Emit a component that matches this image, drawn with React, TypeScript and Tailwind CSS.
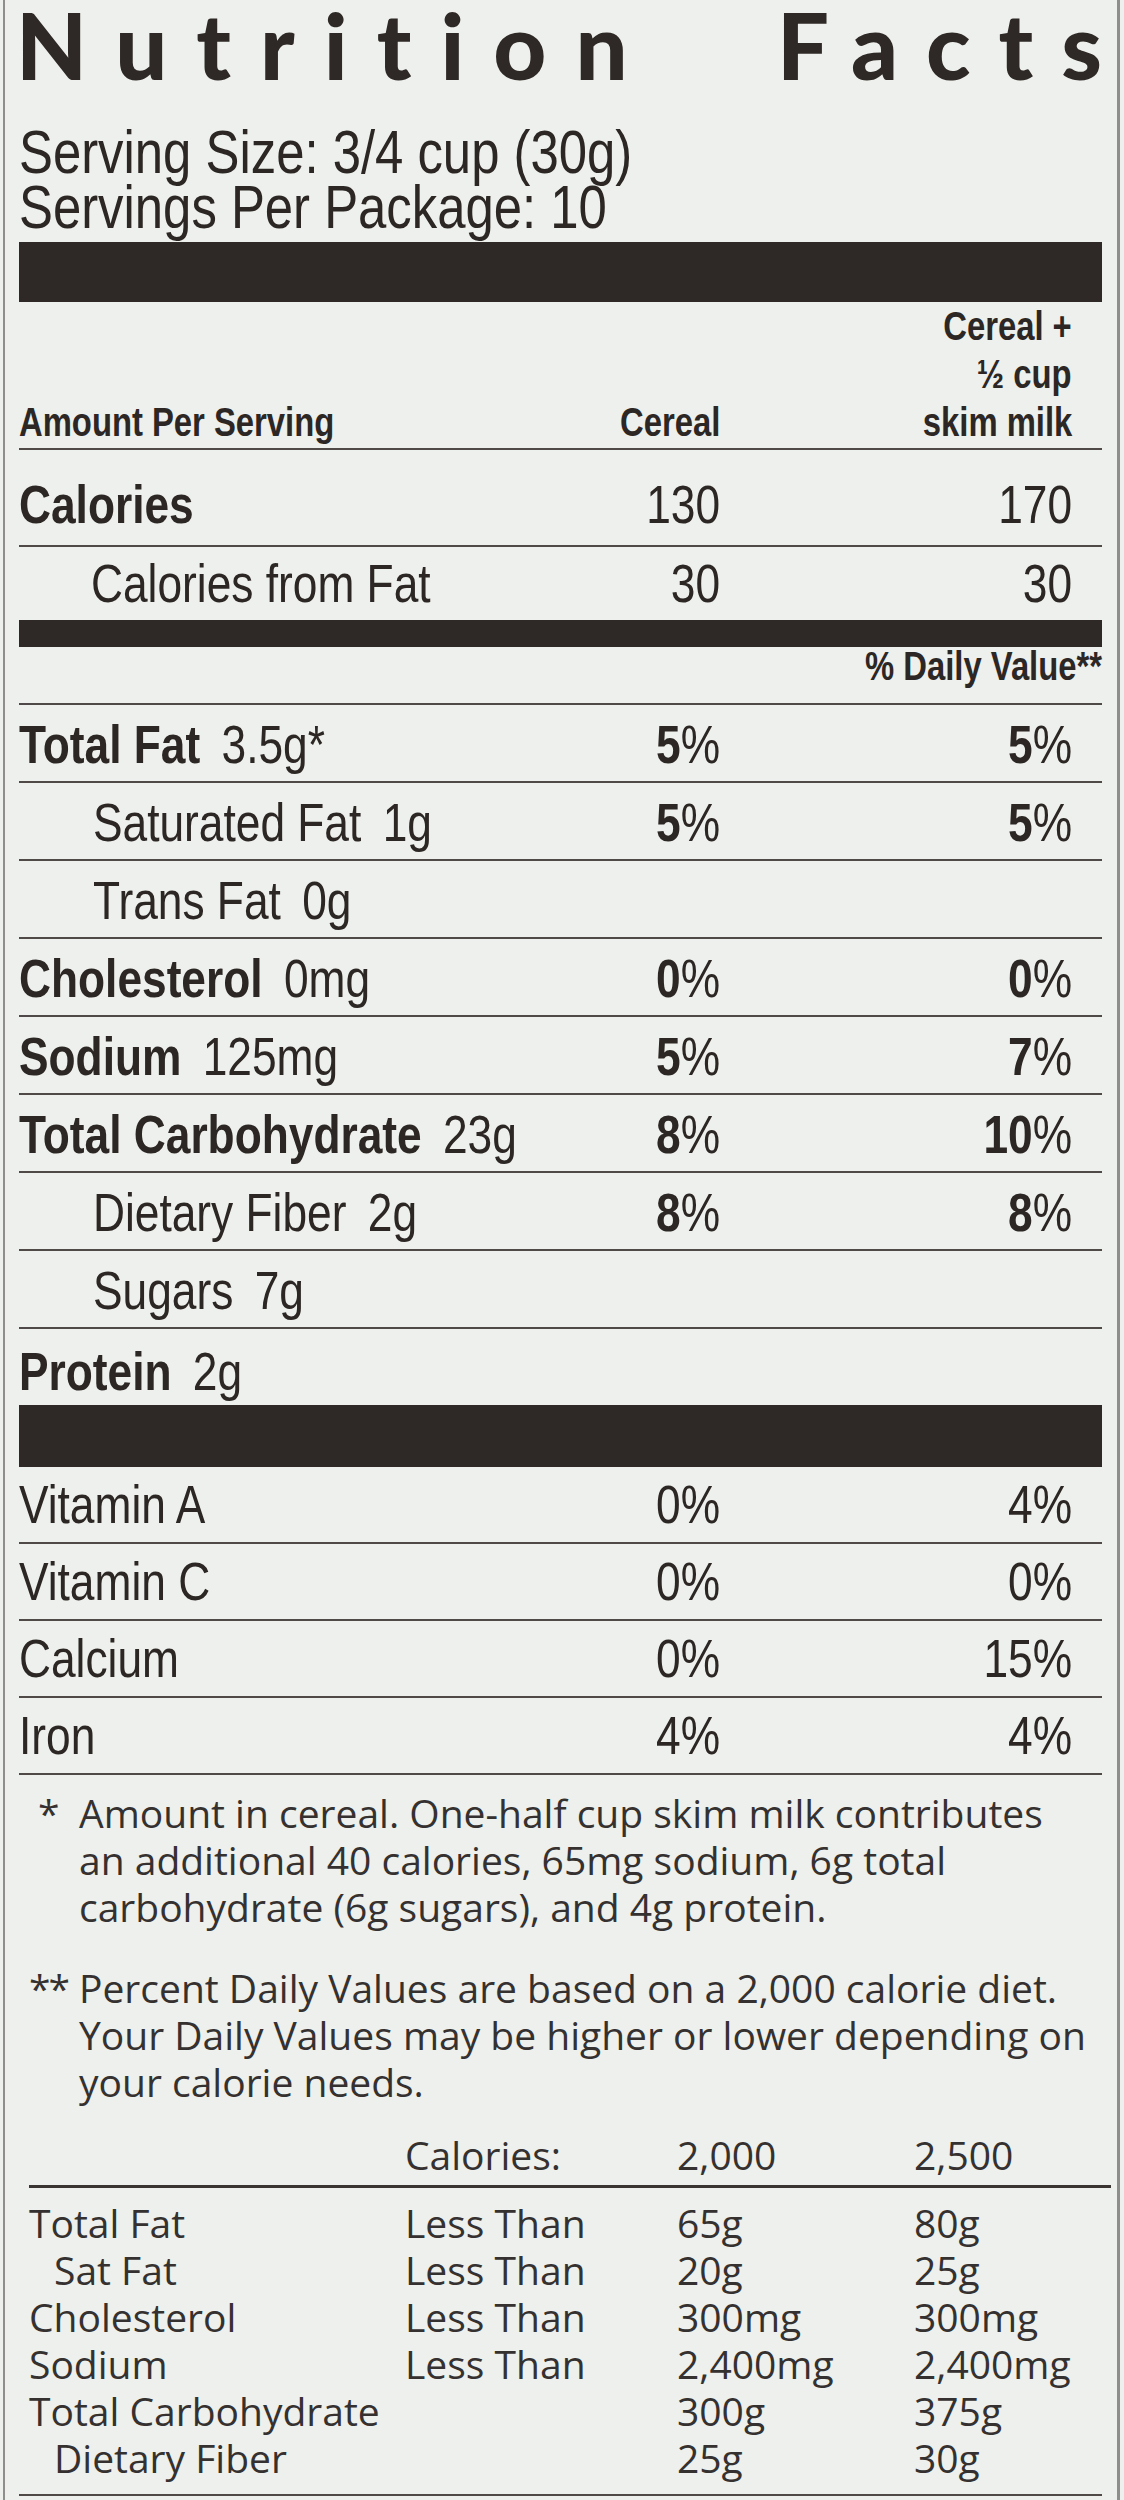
import { ReactNode } from "react";

const sans = "font-['Liberation_Sans','Arial',sans-serif]";

interface Nutrient {
  name: string;
  amount?: string;
  cereal?: string;
  withMilk?: string;
  indent?: boolean;
  lineIndent?: boolean;
}

const nutrients: Nutrient[] = [
  { name: "Total Fat", amount: "3.5g*", cereal: "5", withMilk: "5" },
  { name: "Saturated Fat", amount: "1g", cereal: "5", withMilk: "5", indent: true, lineIndent: true },
  { name: "Trans Fat", amount: "0g", indent: true },
  { name: "Cholesterol", amount: "0mg", cereal: "0", withMilk: "0" },
  { name: "Sodium", amount: "125mg", cereal: "5", withMilk: "7" },
  { name: "Total Carbohydrate", amount: "23g", cereal: "8", withMilk: "10" },
  { name: "Dietary Fiber", amount: "2g", cereal: "8", withMilk: "8", indent: true, lineIndent: true },
  { name: "Sugars", amount: "7g", indent: true },
];

const vitamins = [
  { name: "Vitamin A", cereal: "0%", withMilk: "4%" },
  { name: "Vitamin C", cereal: "0%", withMilk: "0%" },
  { name: "Calcium", cereal: "0%", withMilk: "15%" },
  { name: "Iron", cereal: "4%", withMilk: "4%" },
];

const dailyRows = [
  { name: "Total Fat", limit: "Less Than", a: "65g", b: "80g" },
  { name: "Sat Fat", limit: "Less Than", a: "20g", b: "25g", indent: true },
  { name: "Cholesterol", limit: "Less Than", a: "300mg", b: "300mg" },
  { name: "Sodium", limit: "Less Than", a: "2,400mg", b: "2,400mg" },
  { name: "Total Carbohydrate", limit: "", a: "300g", b: "375g" },
  { name: "Dietary Fiber", limit: "", a: "25g", b: "30g", indent: true },
];

// condensed look: the label face is a narrow sans, so squeeze Liberation Sans
function Cond({ children, right }: { children: ReactNode; right?: boolean }) {
  return (
    <span
      className={`inline-block whitespace-nowrap scale-x-[0.82] ${
        right ? "origin-right" : "origin-left"
      }`}
    >
      {children}
    </span>
  );
}

function Pct({ value }: { value?: string }) {
  if (!value) return null;
  return (
    <Cond right>
      <span className="font-bold">{value}</span>%
    </Cond>
  );
}

const cols = "grid grid-cols-[minmax(0,1fr)_140px_352px] pr-[30px]";

export default function App() {
  return (
    <div className="w-[1124px] h-[2500px] overflow-hidden bg-[#edf0ec] text-[#2c2725]">
      <div className="ml-[3px] w-[1117px] h-[2500px] border-l-2 border-r-[3px] border-[#8e8e8c] pl-[14px] pr-[15px]">
        {/* title */}
        <div className="flex justify-between h-[90px] ml-[-3px] font-['Lato',sans-serif] font-black text-[92px] leading-[90px] text-[#2e2826] whitespace-nowrap">
          <span className="tracking-[29px]">
            Nutritio<span className="tracking-normal">n</span>
          </span>
          <span className="tracking-[28px]">
            Fact<span className="tracking-normal">s</span>
          </span>
        </div>

        <div className={`${sans} mt-[34px] text-[62px] leading-[55px]`}>
          <div>
            <Cond>Serving Size: 3/4 cup (30g)</Cond>
          </div>
          <div>
            <Cond>Servings Per Package: 10</Cond>
          </div>
        </div>

        <div className="mt-[8px] h-[60px] bg-[#2e2927]" />

        <div className={sans}>
          {/* column header */}
          <div className={`${cols} h-[148px] border-b-2 border-[#4f4a48] items-end font-bold text-[40px] leading-[48px] pb-[2px]`}>
            <div>
              <Cond>Amount Per Serving</Cond>
            </div>
            <div className="text-right">
              <Cond right>Cereal</Cond>
            </div>
            <div className="text-right">
              <div>
                <Cond right>Cereal +</Cond>
              </div>
              <div>
                <Cond right>½ cup</Cond>
              </div>
              <div>
                <Cond right>skim milk</Cond>
              </div>
            </div>
          </div>

          <div className={`${cols} h-[97px] border-b-2 border-[#4f4a48] items-end pb-[14px] text-[54px] leading-[54px]`}>
            <div className="font-bold">
              <Cond>Calories</Cond>
            </div>
            <div className="text-right">
              <Cond right>130</Cond>
            </div>
            <div className="text-right">
              <Cond right>170</Cond>
            </div>
          </div>
          <div className={`${cols} h-[73px] items-end pb-[10px] text-[54px] leading-[54px]`}>
            <div className="pl-[72px]">
              <Cond>Calories from Fat</Cond>
            </div>
            <div className="text-right">
              <Cond right>30</Cond>
            </div>
            <div className="text-right">
              <Cond right>30</Cond>
            </div>
          </div>
          <div className="h-[27px] bg-[#2e2927]" />

          <div className="h-[58px] border-b-2 border-[#4f4a48] flex items-end justify-end pb-[17px] font-bold text-[40px] leading-[40px]">
            <Cond right>% Daily Value**</Cond>
          </div>

          {nutrients.map((n) => (
            <div key={n.name} className={`h-[78px] ${n.lineIndent ? "pl-[74px]" : ""}`}>
              <div
                className={`${cols} h-full border-b-2 border-[#4f4a48] items-end pb-[10px] text-[54px] leading-[54px] ${
                  n.lineIndent ? "ml-[-74px] pl-[74px]" : ""
                }`}
              >
                <div className={n.indent && !n.lineIndent ? "pl-[74px]" : ""}>
                  <Cond>
                    <span className={n.indent ? "" : "font-bold"}>{n.name}</span>
                    <span className="ml-[26px]">{n.amount}</span>
                  </Cond>
                </div>
                <div className="text-right">
                  <Pct value={n.cereal} />
                </div>
                <div className="text-right">
                  <Pct value={n.withMilk} />
                </div>
              </div>
            </div>
          ))}

          <div className="h-[76px] flex items-end pb-[7px] text-[54px] leading-[54px]">
            <Cond>
              <span className="font-bold">Protein</span>
              <span className="ml-[26px]">2g</span>
            </Cond>
          </div>
          <div className="h-[62px] bg-[#2e2927]" />

          {vitamins.map((v) => (
            <div
              key={v.name}
              className={`${cols} h-[77px] border-b-2 border-[#4f4a48] items-end pb-[11px] text-[54px] leading-[54px]`}
            >
              <div>
                <Cond>{v.name}</Cond>
              </div>
              <div className="text-right">
                <Cond right>{v.cereal}</Cond>
              </div>
              <div className="text-right">
                <Cond right>{v.withMilk}</Cond>
              </div>
            </div>
          ))}
        </div>

        {/* footnotes */}
        <div className="font-['Open_Sans',sans-serif] text-[39px] leading-[47px] text-[#353130] pl-[10px] whitespace-nowrap">
          <div className="mt-[14px] grid grid-cols-[50px_1fr]">
            <div className="pl-[9px]">*</div>
            <div>
              Amount in cereal. One-half cup skim milk contributes
              <br />
              an additional 40 calories, 65mg sodium, 6g total
              <br />
              carbohydrate (6g sugars), and 4g protein.
            </div>
          </div>
          <div className="mt-[34px] grid grid-cols-[50px_1fr]">
            <div className="tracking-[-2px]">**</div>
            <div>
              Percent Daily Values are based on a 2,000 calorie diet.
              <br />
              Your Daily Values may be higher or lower depending on
              <br />
              your calorie needs.
            </div>
          </div>

          <div className="mt-[26px] mr-[-9px] grid grid-cols-[376px_272px_237px_1fr] h-[57px] border-b-[3px] border-[#3a3533]">
            <div />
            <div>Calories:</div>
            <div>2,000</div>
            <div>2,500</div>
          </div>
          <div className="mt-[11px] border-b-2 border-[#4f4a48] pb-[13px] ml-[-10px] pl-[10px]">
            {dailyRows.map((r) => (
              <div key={r.name} className="grid grid-cols-[376px_272px_237px_1fr]">
                <div className={r.indent ? "pl-[25px]" : ""}>{r.name}</div>
                <div>{r.limit}</div>
                <div>{r.a}</div>
                <div>{r.b}</div>
              </div>
            ))}
          </div>
        </div>
      </div>
    </div>
  );
}
